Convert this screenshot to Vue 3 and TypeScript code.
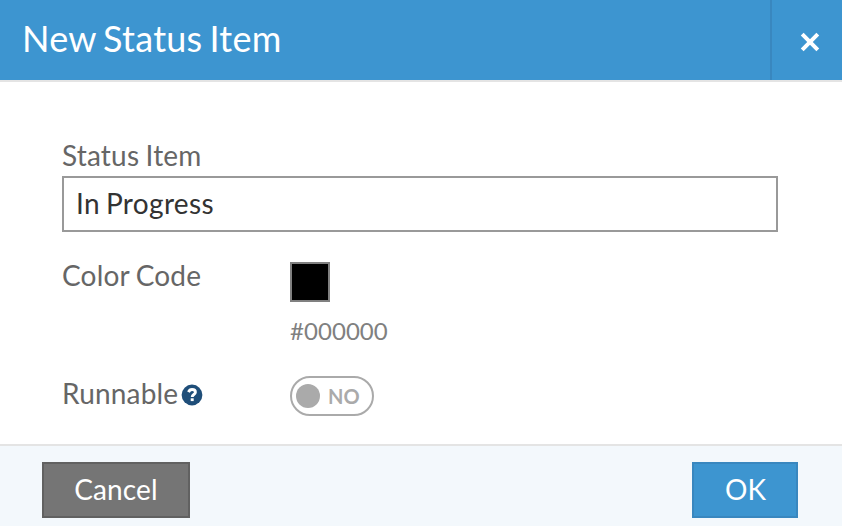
<script setup lang="ts">
import { ref } from 'vue'

const statusItem = ref('In Progress')
const colorCode = ref('#000000')
const runnable = ref(false)
</script>

<template>
  <div class="dialog" role="dialog" aria-labelledby="dialog-title">
    <header class="header">
      <h1 id="dialog-title" class="title">New Status Item</h1>
      <button class="close" type="button" aria-label="Close">
        <svg width="20" height="20" viewBox="0 0 20 20">
          <path d="M2.2 2.2 17.8 17.8M17.8 2.2 2.2 17.8" fill="none" stroke="#fff" stroke-width="4" />
        </svg>
      </button>
    </header>

    <main class="body">
      <label class="label" for="status-item">Status Item</label>
      <input id="status-item" v-model="statusItem" class="input" type="text" />

      <div class="row color-row">
        <span class="label">Color Code</span>
        <div class="color-field">
          <button class="swatch" type="button" :style="{ backgroundColor: colorCode }" aria-label="Pick color"></button>
          <span class="hex">{{ colorCode }}</span>
        </div>
      </div>

      <div class="row runnable-row">
        <span class="label runnable"><span class="runnable-text">Runnable</span>
          <svg class="help" width="22" height="22" viewBox="0 0 22 22">
            <circle cx="11" cy="11" r="10.4" fill="#1f4e79" />
            <path d="M7.5 8.1C8.3 6.2 9.5 5.5 11 5.5c2 0 3.4 1.1 3.4 2.7 0 2.4-3.2 2.2-3.2 4.7" fill="none" stroke="#fff" stroke-width="2.9" />
            <rect x="9.7" y="14.3" width="3" height="2.8" fill="#fff" />
          </svg>
        </span>
        <button class="toggle" type="button" role="switch" :aria-checked="runnable" @click="runnable = !runnable">
          <span class="knob"></span>
          <span class="toggle-text">{{ runnable ? 'YES' : 'NO' }}</span>
        </button>
      </div>
    </main>

    <footer class="footer">
      <button class="btn cancel" type="button">Cancel</button>
      <button class="btn ok" type="button">OK</button>
    </footer>
  </div>
</template>

<style>
body {
  margin: 0;
  overflow: hidden;
}
</style>

<style scoped>
.dialog {
  display: flex;
  flex-direction: column;
  width: 842px;
  height: 526px;
  background: #fff;
  font-family: Lato, sans-serif;
}

.dialog *,
.dialog {
  box-sizing: border-box;
}

button,
input {
  margin: 0;
  font-family: inherit;
  outline: none;
}

.header {
  display: flex;
  justify-content: space-between;
  flex: none;
  height: 82px;
  background: #3d95d0;
  border-bottom: 2px solid #e4e4e4;
}

.title {
  margin: 0;
  padding-left: 22px;
  color: #fff;
  font-size: 36px;
  font-weight: 400;
  letter-spacing: 0.25px;
  line-height: 77px;
  word-spacing: -2.4px;
}

.close {
  display: flex;
  align-items: center;
  justify-content: center;
  width: 72px;
  padding: 4px 0 0 6px;
  background: none;
  border: 0;
  border-left: 2px solid #3987bf;
}

.body {
  flex: 1;
  padding: 55px 64px 0 62px;
}

.label {
  display: block;
  color: #666;
  font-size: 28px;
  letter-spacing: 0.18px;
  line-height: 36px;
  word-spacing: -1px;
}

.input {
  display: block;
  width: 716px;
  height: 56px;
  margin-top: 3px;
  padding: 0 12px 2px;
  color: #333;
  background: #fff;
  border: 2px solid #999;
  border-radius: 0;
  font-size: 28px;
  letter-spacing: 0.35px;
  word-spacing: -1.5px;
}

.row {
  display: grid;
  grid-template-columns: 228px 1fr;
  align-items: start;
}

.color-row {
  height: 118px;
  margin-top: 25px;
}

.color-field {
  display: flex;
  flex-direction: column;
  align-items: flex-start;
  padding-top: 5px;
}

.swatch {
  width: 40px;
  height: 40px;
  padding: 0;
  border: 2px solid #808080;
}

.hex {
  margin-top: 14px;
  color: #808080;
  font-size: 24px;
  letter-spacing: 0.05px;
  line-height: 30px;
}

.runnable {
  display: flex;
  align-items: center;
  gap: 3px;
}

.help {
  margin-top: 4px;
}

.toggle {
  display: flex;
  align-items: center;
  width: 84px;
  height: 40px;
  margin-top: 1px;
  padding: 0 0 0 4px;
  color: #aaa;
  background: #fff;
  border: 2px solid #aaa;
  border-radius: 20px;
}

.knob {
  width: 24px;
  height: 24px;
  border-radius: 50%;
  background: #aaa;
}

.toggle-text {
  margin-left: 8px;
  font-size: 20px;
  font-weight: 700;
  line-height: 24px;
}

.footer {
  display: flex;
  align-items: flex-start;
  justify-content: space-between;
  flex: none;
  height: 82px;
  padding: 16px 44px 0 42px;
  background: #f3f8fc;
  border-top: 2px solid #e4e4e4;
}

.btn {
  height: 56px;
  padding: 0 0 2px;
  color: #fff;
  border: 2px solid;
  font-size: 28px;
  letter-spacing: 0.12px;
  line-height: 50px;
}

.cancel {
  width: 148px;
  background: #757575;
  border-color: #616161;
}

.ok {
  width: 106px;
  padding-left: 1px;
  background: #3d95d0;
  border-color: #3987bf;
}
</style>
